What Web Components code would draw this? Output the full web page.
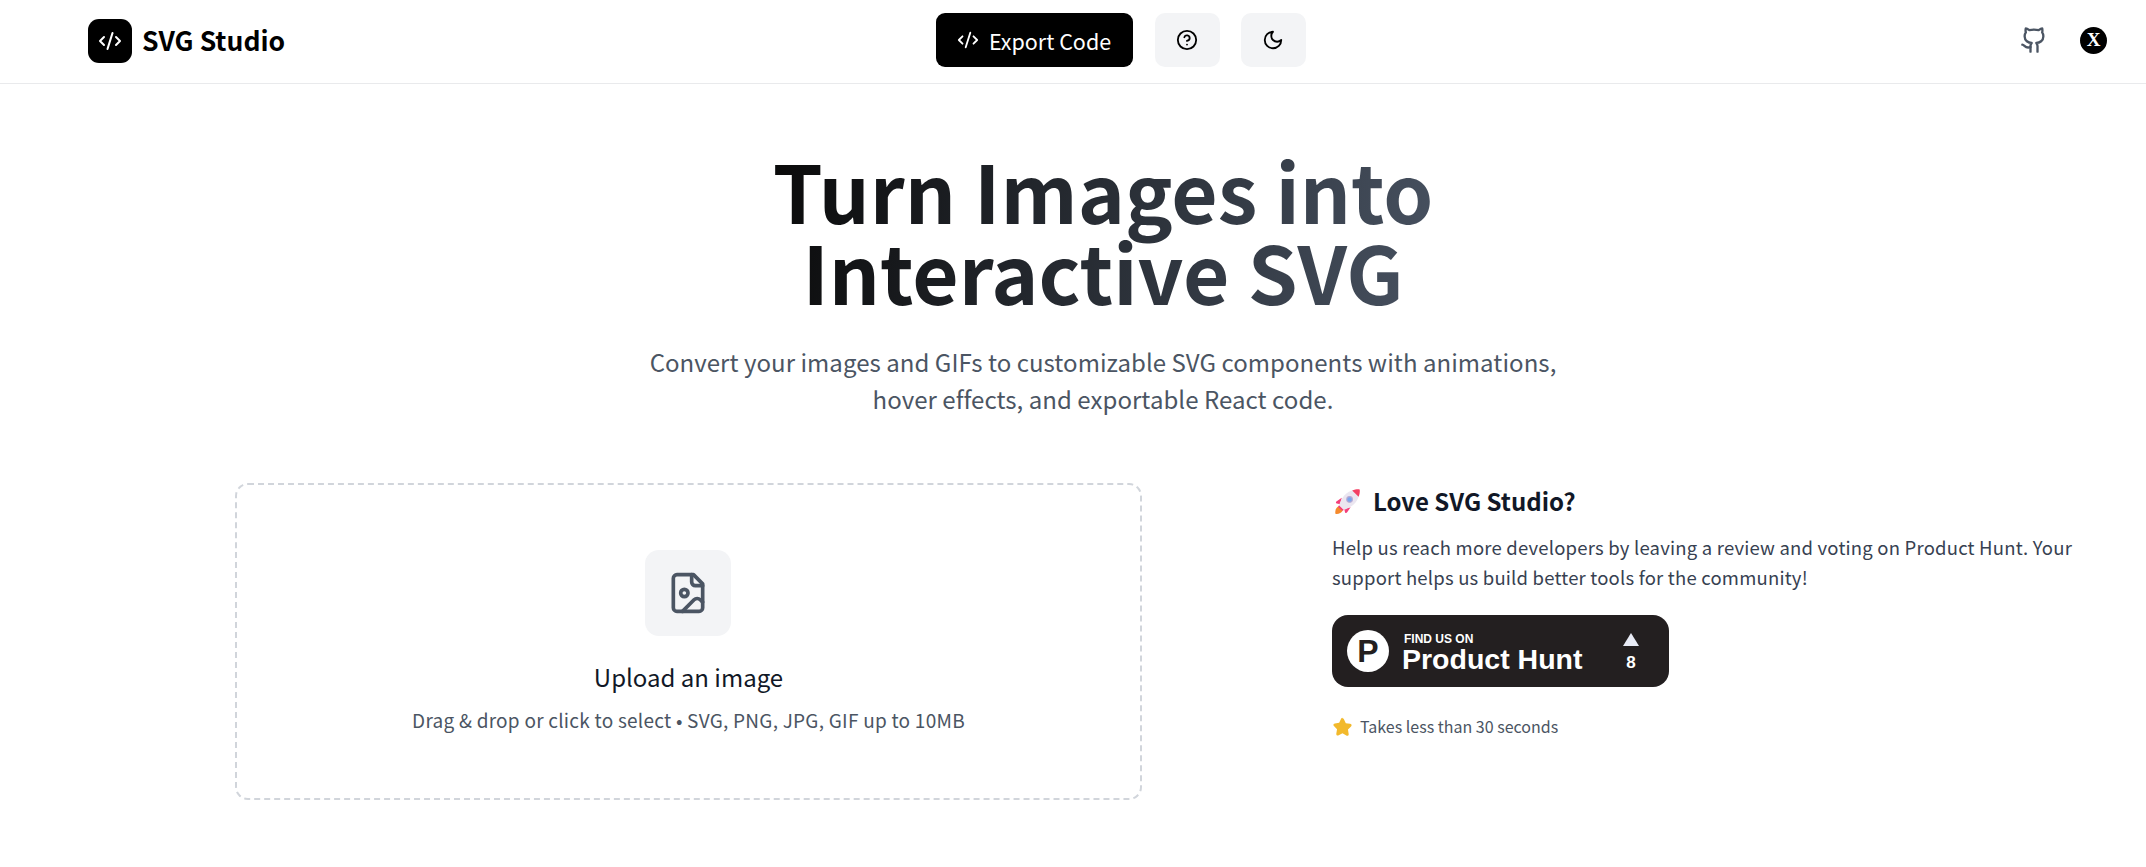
<!DOCTYPE html>
<html lang="en">
<head>
<meta charset="utf-8">
<title>SVG Studio</title>
<style>
  html, body { margin: 0; background: #fff; }
  body { font-family: "Noto Sans CJK KR", "Noto Sans", sans-serif; color: #111827; }
</style>
</head>
<body>
<app-header></app-header>
<main-hero></main-hero>
<main-columns>
  <upload-zone slot="left"></upload-zone>
  <promo-panel slot="right"></promo-panel>
</main-columns>

<script>
// small helper for the outline icons, all of them are 24x24 with a round stroke
const icon = (size, inner, width = 2) => `
  <svg width="${size}" height="${size}" viewBox="0 0 24 24" fill="none" stroke="currentColor"
    stroke-width="${width}" stroke-linecap="round" stroke-linejoin="round">${inner}</svg>`

const CODE = '<path d="m18 16 4-4-4-4"/><path d="m6 8-4 4 4 4"/><path d="m14.5 4-5 16"/>'
const HELP = '<circle cx="12" cy="12" r="10"/><path d="M9.09 9a3 3 0 0 1 5.83 1c0 2-3 3-3 3"/><path d="M12 17h.01"/>'
const MOON = '<path d="M12 3a6 6 0 0 0 9 9 9 9 0 1 1-9-9Z"/>'
const GITHUB = '<path d="M15 22v-4a4.8 4.8 0 0 0-1-3.5c3 0 6-2 6-5.5.08-1.25-.27-2.48-1-3.5.28-1.15.28-2.35 0-3.5 0 0-1 0-3 1.5-2.64-.5-5.36-.5-8 0C6 2 5 2 5 2c-.3 1.15-.3 2.35 0 3.5A5.403 5.403 0 0 0 4 9c0 3.5 3 5.5 6 5.5-.39.49-.68 1.05-.85 1.65-.17.6-.22 1.23-.15 1.85v4"/><path d="M9 18c-4.51 2-5-2-7-2"/>'
const FILE_IMAGE = '<path d="M15 2H6a2 2 0 0 0-2 2v16a2 2 0 0 0 2 2h12a2 2 0 0 0 2-2V7Z"/><path d="M14 2v4a2 2 0 0 0 2 2h4"/><circle cx="10" cy="12" r="2"/><path d="m20 17-1.296-1.296a2.41 2.41 0 0 0-3.408 0L9 22"/>'

class AppHeader extends HTMLElement {
  constructor() {
    super()
    this.attachShadow({ mode: 'open' })
    this.shadowRoot.innerHTML = `
      <style>
        :host { display: grid; grid-template-columns: 1fr auto 1fr; align-items: center; height: 83px;
          padding: 0 39px 0 88px; border-bottom: 1px solid #e9eaec; background: #fff; }
        .brand { display: flex; align-items: center; gap: 10px; margin-top: -2px; font-size: 26.500px; font-weight: 700; color: #000; }
        .brand span:last-child { padding-bottom: 3px; }
        .logo { width: 44px; height: 44px; border-radius: 11px; background: #000; color: #fff;
          display: flex; align-items: center; justify-content: center; }
        .mid { display: flex; align-items: center; gap: 22px; margin: -3px 0 0 46px; }
        .export { height: 54px; width: 197px; box-sizing: border-box; border-radius: 9px; background: #000; color: #fff;
          display: flex; align-items: center; justify-content: center; gap: 10px; font-size: 21.500px; }
        .square { width: 65px; height: 54px; border-radius: 10px; background: #f3f4f6; color: #000;
          display: flex; align-items: center; justify-content: center; }
        .square + .square { margin-left: -1px; }
        .links { justify-self: end; display: flex; align-items: center; gap: 32px; margin-top: -3px; }
        .gh { color: #4b5563; display: flex; }
        .x { width: 27px; height: 27px; border-radius: 50%; background: #000; color: #fff;
          display: flex; align-items: center; justify-content: center;
          font: 700 19px "Liberation Serif", serif; }
      </style>
      <div class="brand"><span class="logo">${icon(24, CODE)}</span><span>SVG Studio</span></div>
      <div class="mid">
        <div class="export">${icon(22, CODE)}<span>Export Code</span></div>
        <div class="square">${icon(22, HELP)}</div>
        <div class="square">${icon(22, MOON)}</div>
      </div>
      <div class="links">
        <span class="gh">${icon(28, GITHUB)}</span>
        <span class="x">X</span>
      </div>`
  }
}

class MainHero extends HTMLElement {
  constructor() {
    super()
    this.attachShadow({ mode: 'open' })
    this.shadowRoot.innerHTML = `
      <style>
        :host { display: flex; flex-direction: column; align-items: center; text-align: center; padding: 65px 0 0 60px; }
        h1 { margin: 0; font-size: 80px; line-height: 81px; font-weight: 700;
          background: linear-gradient(100deg, #0a0a0a, #475160); -webkit-background-clip: text; background-clip: text;
          color: transparent; }
        p { margin: 32px 0 0; font-size: 24px; line-height: 37px; letter-spacing: .05px; color: #4b5563; }
      </style>
      <h1>Turn Images into<br>Interactive SVG</h1>
      <p>Convert your images and GIFs to customizable SVG components with animations,<br>hover effects, and exportable React code.</p>`
  }
}

class MainColumns extends HTMLElement {
  constructor() {
    super()
    this.attachShadow({ mode: 'open' })
    this.shadowRoot.innerHTML = `
      <style>
        :host { display: grid; grid-template-columns: 907px 745px; column-gap: 190px; padding: 66px 0 0 235px; align-items: start; }
      </style>
      <slot name="left"></slot>
      <slot name="right"></slot>`
  }
}

class UploadZone extends HTMLElement {
  constructor() {
    super()
    this.attachShadow({ mode: 'open' })
    this.shadowRoot.innerHTML = `
      <style>
        :host { display: flex; flex-direction: column; align-items: center; box-sizing: border-box; height: 317px;
          padding-top: 65px; border: 2px dashed #d1d5db; border-radius: 13px; }
        .tile { width: 86px; height: 86px; border-radius: 14px; background: #f3f4f6; color: #4b5563; margin-right: 2px;
          display: flex; align-items: center; justify-content: center; }
        h3 { margin: 24px 0 0; font-size: 24px; line-height: 34px; font-weight: 400; color: #111827; }
        p { margin: 12px 0 0; font-size: 19px; line-height: 28px; letter-spacing: .25px; color: #4b5563; }
      </style>
      <div class="tile">${icon(44, FILE_IMAGE)}</div>
      <h3>Upload an image</h3>
      <p>Drag &amp; drop or click to select • SVG, PNG, JPG, GIF up to 10MB</p>`
  }
}

class PhBadge extends HTMLElement {
  constructor() {
    super()
    this.attachShadow({ mode: 'open' })
    this.shadowRoot.innerHTML = `
      <style>
        :host { display: flex; align-items: center; box-sizing: border-box; width: 337px; height: 72px; padding: 0 30px 0 15px;
          border-radius: 16px; background: #231f20; color: #fff; font-family: "Liberation Sans", Arial, sans-serif; }
        .p { width: 42px; height: 42px; border-radius: 50%; background: #fff; color: #231f20; flex: none;
          display: flex; align-items: center; justify-content: center; font-size: 32px; font-weight: 700; }
        .name { margin: 3px 0 0 13px; flex: 1; display: flex; flex-direction: column; }
        small { margin-left: 2px; font-size: 12px; line-height: 12px; font-weight: 700; }
        b { font-size: 28.500px; line-height: 28px; }
        .votes { display: flex; flex-direction: column; align-items: center; gap: 8px; margin-top: 2px; font-size: 17px; font-weight: 700; line-height: 17px; }
        i { width: 0; height: 0; border-left: 8px solid transparent; border-right: 8px solid transparent; border-bottom: 13px solid #e8ebf5; }
      </style>
      <span class="p">P</span>
      <span class="name"><small>FIND US ON</small><b>Product Hunt</b></span>
      <span class="votes"><i></i>8</span>`
  }
}

class PromoPanel extends HTMLElement {
  constructor() {
    super()
    this.attachShadow({ mode: 'open' })
    this.shadowRoot.innerHTML = `
      <style>
        :host { display: flex; flex-direction: column; align-items: flex-start; padding-top: 1px; }
        h3 { margin: 0; display: flex; align-items: center; gap: 12px; font-size: 24px; line-height: 34px; font-weight: 700; color: #111827; }
        h3 svg { margin-left: 2px; }
        p { margin: 14px 0 0; font-size: 18.500px; line-height: 30px; letter-spacing: .2px; color: #374151; }
        ph-badge { margin-top: 23px; }
        .note { margin-top: 27px; display: flex; align-items: center; gap: 8px; font-size: 16px; line-height: 24px; color: #4b5563; }
        .note svg { margin-left: 1px; }
      </style>
      <h3>
        <svg width="27" height="27" viewBox="0 0 26 26">
          <path d="M1.500 25c-.8-3 .2-6 2.800-7.500l4.200 4.200C7 24 4.500 25.500 1.500 25Z" fill="#f58a2c"/>
          <path d="M7.500 9.500 2.300 13c-.8.6-.5 1.700.4 1.900l3.300.8Z" fill="#f43f7a"/>
          <path d="m16 18.500-3.500 5.200c-.6.8-1.700.5-1.900-.4l-.8-3.300Z" fill="#f43f7a"/>
          <path d="M5 16.500C7 9 12.500 3 19 2l5 5c-1 6.500-7 12-14.500 14Z" fill="#ebe6f0"/>
          <path d="M17.500 2.300C20 1.300 22.500 1 24.200 1.200c.4.200.6.400.6.800.2 1.700-.1 4.200-1.100 6.500Z" fill="#f43f63"/>
          <circle cx="15" cy="11" r="2.700" fill="#7aa7ec" stroke="#b9a9d3"/>
          <path d="M4.800 16.500 9.500 21.200 7.800 22 4 18.200Z" fill="#f43f7a"/>
        </svg>
        Love SVG Studio?
      </h3>
      <p>Help us reach more developers by leaving a review and voting on Product Hunt. Your<br>support helps us build better tools for the community!</p>
      <ph-badge></ph-badge>
      <div class="note">
        <svg width="19" height="19" viewBox="0 0 24 24">
          <path d="M12 1.500c.8 0 1.400.5 1.800 1.300l2.400 5 5.400.8c1.900.3 2.500 2.100 1.200 3.400l-3.900 3.900.9 5.500c.3 1.900-1.400 3-3 2.100L12 20.500 7.200 23c-1.600.9-3.300-.2-3-2.100l.9-5.500-3.900-3.900C-.1 10.200.5 8.400 2.400 8.100l5.400-.8 2.400-5c.4-.8 1-1.300 1.800-1.300Z" fill="#f2b92c"/>
        </svg>
        Takes less than 30 seconds
      </div>`
  }
}

customElements.define('app-header', AppHeader)
customElements.define('main-hero', MainHero)
customElements.define('main-columns', MainColumns)
customElements.define('upload-zone', UploadZone)
customElements.define('ph-badge', PhBadge)
customElements.define('promo-panel', PromoPanel)
</script>
</body>
</html>
